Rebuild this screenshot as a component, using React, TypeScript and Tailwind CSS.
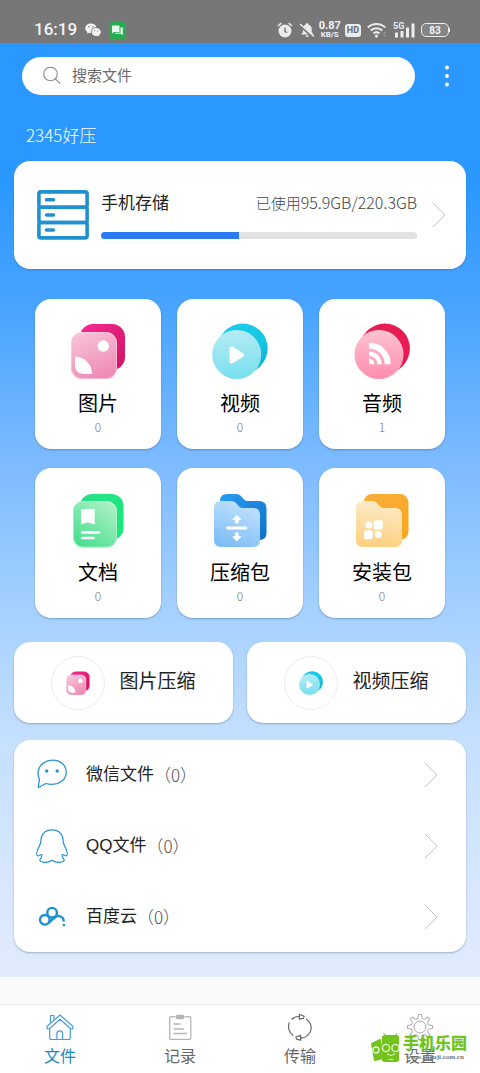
import type { ReactNode } from "react";

const ImageIcon = ({ className }: { className: string }) => (
  <svg viewBox="0 0 56 56" className={className}>
    <defs>
      <linearGradient id="imgBack" x1="0" y1="0" x2="1" y2="1">
        <stop offset="0" stopColor="#f52a92" />
        <stop offset="1" stopColor="#cf1263" />
      </linearGradient>
      <linearGradient id="imgFront" x1="0.2" y1="0" x2="0.6" y2="1">
        <stop offset="0" stopColor="#f9c3da" />
        <stop offset="1" stopColor="#ee8ab6" />
      </linearGradient>
    </defs>
    <rect x="10" y="1" width="45" height="46" rx="13" fill="url(#imgBack)" />
    <rect x="1" y="9" width="46" height="47" rx="11" fill="url(#imgFront)" />
    <rect x="1.5" y="9.5" width="45" height="46" rx="10.5" fill="none" stroke="#fbd5e5" strokeOpacity="0.6" />
    <circle cx="33.3" cy="23" r="5.7" fill="#fff" />
    <path d="M5 33.5C14.5 34 22 41 22 51H14C8 51 5 47.5 5 42Z" fill="#fff" />
  </svg>
);

const VideoIcon = ({ className }: { className: string }) => (
  <svg viewBox="0 0 56 56" className={className}>
    <defs>
      <linearGradient id="vidBack" x1="0" y1="0" x2="1" y2="1">
        <stop offset="0" stopColor="#1fc9ee" />
        <stop offset="0.6" stopColor="#16c8e6" />
        <stop offset="1" stopColor="#13a9c4" />
      </linearGradient>
      <linearGradient id="vidFront" x1="0.4" y1="0" x2="0.5" y2="1">
        <stop offset="0" stopColor="#b5ecf5" />
        <stop offset="1" stopColor="#78dfee" />
      </linearGradient>
    </defs>
    <circle cx="30.7" cy="25.5" r="25" fill="url(#vidBack)" />
    <circle cx="24.7" cy="31.5" r="24.5" fill="url(#vidFront)" />
    <path d="M19.5 25.5V38.5L30 32Z" fill="#fff" stroke="#fff" strokeWidth="4" strokeLinejoin="round" />
  </svg>
);

const AudioIcon = ({ className }: { className: string }) => (
  <svg viewBox="0 0 56 56" className={className}>
    <defs>
      <linearGradient id="audBack" x1="0" y1="0" x2="1" y2="1">
        <stop offset="0" stopColor="#e02052" />
        <stop offset="1" stopColor="#ee1854" />
      </linearGradient>
      <linearGradient id="audFront" x1="0.5" y1="0" x2="0.5" y2="1">
        <stop offset="0" stopColor="#fcc3d1" />
        <stop offset="1" stopColor="#ff8dae" />
      </linearGradient>
    </defs>
    <circle cx="30.9" cy="25.5" r="25" fill="url(#audBack)" />
    <circle cx="25" cy="31.5" r="24.5" fill="url(#audFront)" />
    <path d="M15 35.7A5.5 5.5 0 0 1 20.5 41.2H15Z" fill="#fff" />
    <path d="M15 30.7A10.5 10.5 0 0 1 25.5 41.2" fill="none" stroke="#fff" strokeWidth="4.5" />
    <path d="M15 22.5A18.7 18.7 0 0 1 33.7 41.2" fill="none" stroke="#fff" strokeWidth="6" />
  </svg>
);

const DocIcon = ({ className }: { className: string }) => (
  <svg viewBox="0 0 56 56" className={className}>
    <defs>
      <linearGradient id="docBack" x1="0" y1="0" x2="1" y2="1">
        <stop offset="0" stopColor="#2ce088" />
        <stop offset="1" stopColor="#12ea76" />
      </linearGradient>
      <linearGradient id="docFront" x1="1" y1="0" x2="0.3" y2="1">
        <stop offset="0" stopColor="#b7f3cc" />
        <stop offset="1" stopColor="#4ddf90" />
      </linearGradient>
    </defs>
    <rect x="10" y="2" width="43.5" height="46" rx="12" fill="url(#docBack)" />
    <rect x="3" y="9" width="44" height="46.5" rx="10" fill="url(#docFront)" />
    <rect x="3.5" y="9.5" width="43" height="45.5" rx="9.5" fill="none" stroke="#c5f6d8" strokeOpacity="0.6" />
    <path d="M11 18Q11 17 12 17H23.7Q24.7 17 24.7 18V32.5L17.8 30.3L11 32.5Z" fill="#fff" />
    <path d="M12.2 40.4H29M12.2 46H23.5" stroke="#fff" strokeWidth="2.7" strokeLinecap="round" />
  </svg>
);

const ZipIcon = ({ className }: { className: string }) => (
  <svg viewBox="0 0 56 56" className={className}>
    <defs>
      <linearGradient id="zipBack" x1="0" y1="0" x2="1" y2="1">
        <stop offset="0" stopColor="#2a9bf2" />
        <stop offset="1" stopColor="#0f71cb" />
      </linearGradient>
      <linearGradient id="zipFront" x1="0.7" y1="0" x2="0.3" y2="1">
        <stop offset="0" stopColor="#c3e2fc" />
        <stop offset="1" stopColor="#7dbdf7" />
      </linearGradient>
    </defs>
    <path d="M8 9Q8 2 15 2H24Q27 2 29 4L32 7.5Q33.5 9 36 9H47Q54.5 9 54.5 16.5V41Q54.5 48 47.5 48H15Q8 48 8 41Z" fill="url(#zipBack)" />
    <path d="M2 16Q2 9 9 9H19Q22 9 24 11L27 14.5Q28.5 16 31 16H41Q48 16 48 23V48Q48 55 41 55H9Q2 55 2 48Z" fill="url(#zipFront)" />
    <path d="M15.5 36H34" stroke="#fff" strokeWidth="2.8" strokeLinecap="round" />
    <path
      d="M23.5 31V27.500H20.8L24.8 23.300L28.8 27.500H26.1V31ZM23.5 41V44.800H20.8L24.8 49L28.8 44.800H26.1V41Z"
      fill="#fff"
      stroke="#fff"
      strokeLinejoin="round"
    />
  </svg>
);

const ApkIcon = ({ className }: { className: string }) => (
  <svg viewBox="0 0 56 56" className={className}>
    <defs>
      <linearGradient id="apkBack" x1="0" y1="0" x2="1" y2="1">
        <stop offset="0" stopColor="#f6ae3c" />
        <stop offset="1" stopColor="#fca81d" />
      </linearGradient>
      <linearGradient id="apkFront" x1="0.5" y1="0" x2="0.4" y2="1">
        <stop offset="0" stopColor="#fdebc9" />
        <stop offset="1" stopColor="#fdd080" />
      </linearGradient>
    </defs>
    <rect x="9.5" y="2" width="45" height="46" rx="8.5" fill="url(#apkBack)" />
    <path d="M2 16Q2 9 9 9H18Q21 9 23 11L26 14.5Q27.5 16 30 16H41Q48 16 48 23V48Q48 55 41 55H9Q2 55 2 48Z" fill="url(#apkFront)" />
    <circle cx="14.9" cy="33" r="3.5" fill="#fff" />
    <rect x="19.5" y="28.3" width="9.3" height="9.3" rx="2.5" fill="#fff" />
    <rect x="10" y="38.2" width="8.8" height="9" rx="2.5" fill="#fff" />
    <circle cx="24.2" cy="42.4" r="3.4" fill="#fff" />
  </svg>
);

const ServerIcon = () => (
  <svg viewBox="0 0 52 50" className="h-[50px] w-[52px] shrink-0" fill="none" stroke="#2090cf" strokeWidth="3.6">
    <rect x="1.9" y="1.9" width="48.2" height="15.4" rx="2" />
    <rect x="1.9" y="17.3" width="48.2" height="15.2" rx="2" />
    <rect x="1.9" y="32.5" width="48.2" height="15.4" rx="2" />
    <path d="M9.5 9.7H16.5M9.5 25H16.5M9.5 40H16.5" strokeLinecap="round" />
  </svg>
);

const ChevronIcon = () => (
  <svg viewBox="0 0 14 26" className="h-[26px] w-[14px] shrink-0" fill="none" stroke="#c4c4c4">
    <path d="M1 1L13 13L1 25" />
  </svg>
);

const WechatFileIcon = () => (
  <svg viewBox="0 0 32 34" className="h-[34px] w-8" fill="none" stroke="#2a94cf" strokeWidth="1.3">
    <path d="M3.4 21.5C.8 15.5 2 8.8 7.4 5C13 1 21 1.3 26 5.2C31.5 9.7 31.7 18.5 26 23C21.5 26.7 14.5 27 10 25.5L2.3 29.5Z" strokeLinejoin="round" />
    <circle cx="10.7" cy="13" r="1.7" fill="#2a94cf" stroke="none" />
    <circle cx="21.2" cy="13" r="1.7" fill="#2a94cf" stroke="none" />
  </svg>
);

const QQIcon = () => (
  <svg viewBox="0 0 32 34" className="h-[34px] w-8" fill="none" stroke="#2a94cf" strokeWidth="1.2" strokeLinejoin="round">
    <path d="M16 .8C9 .8 5 5.500 5 11C5 14.500 4 16 2.400 19C.8 22.500 .2 26 1.500 26.800C2.700 27.300 4.200 25 5.600 25.800C6.800 26.600 4.800 28 5.200 29C3.700 30 3.400 31.300 4.600 32.300C6.800 33.900 13 33.700 16 31.300C19 33.700 25.200 33.900 27.400 32.300C28.600 31.300 28.300 30 26.800 29C27.200 28 25.200 26.600 26.400 25.800C27.800 25 29.300 27.300 30.500 26.800C31.800 26 31.200 22.500 29.600 19C28 16 27 14.500 27 11C27 5.500 23 .8 16 .8Z" />
  </svg>
);

const BaiduIcon = () => (
  <svg viewBox="0 0 32 34" className="h-[34px] w-8" fill="none" stroke="#1f8fce" strokeWidth="2.4">
    <circle cx="8.8" cy="19.8" r="4.8" />
    <circle cx="16.1" cy="12.7" r="4.8" />
    <path d="M12.3 23.2L18.7 17.5C22.5 14.5 27.6 16.5 27.8 21.5" />
    <circle cx="27.9" cy="25" r="1.3" fill="#1f8fce" stroke="none" />
  </svg>
);

const HomeIcon = () => (
  <svg viewBox="0 0 28 28" className="h-7 w-7" fill="none" stroke="#4a9cdf" strokeWidth="1.2" strokeLinejoin="round">
    <path d="M1.2 13.3L14 2L26.8 13.3V15.8L25 16L14 6.2L3 16L1.2 15.8Z" />
    <path d="M4.5 10V2.5H8V7M3.7 16V24.5Q3.7 26.5 5.7 26.5H22.3Q24.3 26.5 24.3 24.5V16M10.9 26.5V20.5Q10.9 17.8 13.8 17.8Q16.6 17.8 16.6 20.5V26.5" />
  </svg>
);

const RecordIcon = () => (
  <svg viewBox="0 0 28 28" className="h-7 w-7" fill="none" stroke="#b5b5b5" strokeWidth="1.3">
    <path d="M9 3.7H5Q3.7 3.7 3.7 5V25Q3.7 26.3 5 26.3H23.5Q24.8 26.3 24.8 25V5Q24.8 3.7 23.5 3.7H19" />
    <rect x="9.5" y="1.8" width="9" height="4.4" rx="2" fill="#b5b5b5" stroke="none" />
    <path d="M7.5 11H14.5M7.5 16H18M7.5 20.5H21" />
  </svg>
);

const TransferIcon = () => (
  <svg viewBox="0 0 28 28" className="h-7 w-7" fill="none" stroke="#666" strokeWidth="1.2" strokeLinejoin="round">
    <path d="M5.6 6.5C8 4 10.5 3.4 13 3.5M20 6C25.5 9.500 26.5 16 23.300 20.500C21 23.700 18 25 14.500 25.200M7.300 22.700C2.800 19.500 1.500 14 3.300 9.500" />
    <path d="M13.5 1.2L18.2 3.2L17.3 5.4L13.3 6.2Z" />
    <path d="M14.5 22.3L9.8 24L10.8 26.3L14.8 27.2Z" />
  </svg>
);

const gearAngles = [0, 45, 90, 135, 180, 225, 270, 315];

const SettingsIcon = () => (
  <svg viewBox="0 0 28 28" className="h-7 w-7" fill="none" stroke="#aaa" strokeLinejoin="round">
    <circle cx="14" cy="14" r="6" />
    {gearAngles.map((a) => (
      <g key={a} transform={`rotate(${a} 14 14)`}>
        <path d="M12 5L12.5 1.5H15.5L16 5Q18 7.3 18.95 6.22" />
      </g>
    ))}
  </svg>
);

const categories = [
  { name: "图片", count: 0, Icon: ImageIcon },
  { name: "视频", count: 0, Icon: VideoIcon },
  { name: "音频", count: 1, Icon: AudioIcon },
  { name: "文档", count: 0, Icon: DocIcon },
  { name: "压缩包", count: 0, Icon: ZipIcon },
  { name: "安装包", count: 0, Icon: ApkIcon },
];

const compressTools = [
  { name: "图片压缩", Icon: ImageIcon },
  { name: "视频压缩", Icon: VideoIcon },
];

const sources = [
  { name: "微信文件", count: 0, Icon: WechatFileIcon },
  { name: "QQ文件", count: 0, Icon: QQIcon },
  { name: "百度云", count: 0, Icon: BaiduIcon },
];

const tabs = [
  { name: "文件", Icon: HomeIcon, active: true },
  { name: "记录", Icon: RecordIcon, active: false },
  { name: "传输", Icon: TransferIcon, active: false },
  { name: "设置", Icon: SettingsIcon, active: false },
];

function StatusBar() {
  return (
    <div className="flex h-[43px] items-end justify-between bg-[#777] pr-[30px] pb-1 pl-[34px] font-['Roboto',sans-serif] text-[#f2f2f2]">
      <div className="flex h-[18px] items-center">
        <span className="text-[17px] font-medium">16:19</span>
        <svg viewBox="0 0 16 14" className="ml-2 h-3.5 w-4" fill="#f2f2f2">
          <path d="M6 .5C2.7 .5 .3 2.6 .3 5.3C.3 6.9 1.1 8.2 2.4 9L1.9 10.7L3.9 9.7C4.6 9.9 5.3 10 6 10C5.3 6.7 8 4.2 11.5 4.2C11 2 8.7 .5 6 .5Z" />
          <path d="M11.2 4.9C8.5 4.9 6.6 6.7 6.6 8.9C6.6 11.2 8.6 12.9 11.2 12.9C11.8 12.9 12.3 12.8 12.8 12.7L14.4 13.5L14 12.1C15.2 11.3 15.8 10.2 15.8 8.9C15.8 6.7 13.8 4.9 11.2 4.9Z" />
          <g fill="#777">
            <circle cx="4" cy="3.8" r=".8" />
            <circle cx="7.8" cy="3.8" r=".8" />
            <circle cx="9.7" cy="7.8" r=".6" />
            <circle cx="12.8" cy="7.8" r=".6" />
          </g>
        </svg>
        <svg viewBox="0 0 17 17" className="ml-2 h-[17px] w-[17px]">
          <rect width="17" height="17" rx="3.5" fill="#27ad4f" />
          <path d="M3 3.5H10.5V10H5L3 11.5Z" fill="#e9f8ed" />
          <path d="M11.5 5.5H13.8V13.2L12 11.8H6V10.8H11.5Z" fill="#e9f8ed" />
        </svg>
      </div>
      <div className="flex h-[18px] items-center">
        <svg viewBox="0 0 16 16" className="h-4 w-4" fill="none" stroke="#ececec">
          <circle cx="8" cy="9" r="6.5" fill="#ececec" stroke="none" />
          <path d="M1 4L4.3 1.2M15 4L11.7 1.2" strokeWidth="1.6" />
          <path d="M8 5.5V9.3L10 10.8" stroke="#777" strokeWidth="1.4" />
        </svg>
        <svg viewBox="0 0 16 16" className="ml-1.5 h-4 w-4" fill="#ececec">
          <path d="M8 1.2C9 1.2 9.4 1.7 9.4 2.4C11.6 3 12.7 4.8 12.7 7V10L14.5 12.5H2.3L3.9 10V7C3.9 4.8 5 3 6.7 2.4C6.7 1.7 7.2 1.2 8 1.2ZM6.3 13.5H9.9Q9.6 15 8.1 15Q6.7 15 6.3 13.5Z" />
          <path d="M.5 3L14 15" stroke="#777" strokeWidth="2.4" />
          <path d="M1 2L15 14.5" stroke="#ececec" strokeWidth="1.4" />
        </svg>
        <div className="ml-1 flex flex-col items-center">
          <span className="text-[11px] leading-[10px] font-bold">0.87</span>
          <span className="text-[8px] leading-[8px] font-bold">KB/S</span>
        </div>
        <span className="ml-1 rounded-[3px] bg-[#ececec] px-0.5 text-[9px] leading-[13px] font-bold text-[#666]">HD</span>
        <svg viewBox="0 0 20 16" className="ml-1.5 h-4 w-5" fill="none" stroke="#ececec" strokeWidth="2">
          <path d="M.8 5.5C5.5 .7 13.5 .7 18.2 5.5M3.7 8.6C6.9 5.6 12.1 5.6 15.3 8.6M6.5 11.5C8.3 9.9 10.7 9.9 12.5 11.5" />
          <circle cx="9.5" cy="14" r="1.5" fill="#ececec" stroke="none" />
          <path d="M16 11.300L17.500 9.500L19 11.300ZM16 13L17.500 14.800L19 13Z" fill="#a0a0a0" stroke="none" />
        </svg>
        <svg viewBox="0 0 22 16" className="ml-1.5 h-4 w-[22px]" fill="#ececec">
          <text x="0" y="7" fontSize="9" fontWeight="700">5G</text>
          <rect x="2" y="10.5" width="3" height="5" />
          <rect x="7.5" y="9" width="3" height="6.5" />
          <rect x="13" y="5.5" width="3" height="10" />
          <rect x="18.5" y="1.5" width="3" height="14" />
        </svg>
        <div className="ml-1.5 flex items-center">
          <span className="flex h-3.5 w-7 items-center justify-center rounded-[5px] border border-[#ececec] bg-[#858585] text-[10px] font-bold">
            83
          </span>
          <span className="h-1 w-px bg-[#ececec]" />
        </div>
      </div>
    </div>
  );
}

function Card({ className, children }: { className: string; children: ReactNode }) {
  return (
    <button className={`rounded-2xl bg-white shadow-[0_1px_2px_rgba(40,70,110,0.35)] ${className}`}>{children}</button>
  );
}

function Watermark() {
  return (
    <div className="pointer-events-none absolute right-[13px] bottom-2.5 flex items-center">
      <svg viewBox="0 0 30 30" className="h-[30px] w-[30px]">
        <path d="M1 11L9 7L12 25L4 27Z" fill="#72c31c" stroke="#72c31c" strokeWidth="2" strokeLinejoin="round" />
        <rect x="11" y="2" width="17" height="27" rx="2.5" fill="#72c31c" />
        <path d="M14 2L12.5 0M24.5 2L26 0" stroke="#72c31c" />
        <g fill="#72c31c" stroke="#e9f8d4" strokeWidth="1.3">
          <circle cx="5" cy="17" r="3" />
          <circle cx="15" cy="15" r="3.6" />
          <circle cx="24.5" cy="15" r="3.6" />
        </g>
        <path d="M16 21Q20 24 24 21" fill="none" stroke="#e9f8d4" />
        <path d="M18 26.5H22" stroke="#fff" />
      </svg>
      <div className="ml-0.5 flex flex-col items-center">
        <span className="text-base leading-[18px] font-black text-[#72c31c]">手机乐园</span>
        <span className="font-['Liberation_Serif',serif] text-[7px] leading-[8px] font-bold text-[#777]">
          www.shouji.com.cn
        </span>
      </div>
    </div>
  );
}

export default function App() {
  const used = 95.9;
  const total = 220.3;

  return (
    <div className="min-h-screen bg-[#fafafa] font-['Liberation_Sans','Noto_Sans_CJK_SC',sans-serif] text-[#222]">
      <StatusBar />

      <main className="bg-[linear-gradient(180deg,#2b98ff_0%,#2b98ff_15%,#48a4ff_28%,#7dbbff_45%,#a8d2ff_62%,#c6e0fe_75%,#e1ebfd_100%)] px-3.5 pt-3.5 pb-[25px]">
        <div className="flex items-center pl-2">
          <label className="flex h-[38px] flex-1 items-center rounded-[19px] bg-white pl-5">
            <svg viewBox="0 0 20 20" className="h-5 w-5" fill="none" stroke="#8a8a8a" strokeWidth="1.1">
              <circle cx="8.500" cy="8" r="6.8" />
              <path d="M13.3 12.8L18.3 17.7" />
            </svg>
            <input
              type="search"
              aria-label="搜索文件"
              placeholder="搜索文件"
              className="ml-2.5 min-w-0 flex-1 bg-transparent text-[15px] leading-6 outline-none placeholder:text-[#6b6b6b]"
            />
          </label>
          <button aria-label="更多" className="mr-0.5 ml-[15px] flex h-[38px] w-[34px] items-center justify-center">
            <svg viewBox="0 0 4 22" className="h-[22px] w-1" fill="#fff">
              <circle cx="2" cy="2.5" r="1.9" />
              <circle cx="2" cy="11" r="1.9" />
              <circle cx="2" cy="19.5" r="1.9" />
            </svg>
          </button>
        </div>

        <h1 className="mt-7 mb-3.5 pl-3 font-['Noto_Sans_CJK_SC',sans-serif] text-[17px] leading-6 font-light text-white">
          2345好压
        </h1>

        <Card className="flex h-[108px] w-full items-center pr-5 pl-[23px] text-left">
          <ServerIcon />
          <div className="ml-3 flex-1">
            <div className="flex items-start justify-between">
              <span className="text-[17px] leading-6">手机存储</span>
              <span className="font-['Noto_Sans_CJK_SC',sans-serif] text-base leading-5 font-light text-[#444]">
                <span className="text-[15px]">已使用</span>
                {used}GB/{total}GB
              </span>
            </div>
            <div
              role="progressbar"
              aria-label="手机存储"
              aria-valuenow={used}
              aria-valuemax={total}
              className="mt-4 h-[7px] overflow-hidden rounded-full bg-[#e2e2e2]"
            >
              <div className="h-full bg-[#2a7bf3]" style={{ width: `${(used / total) * 100}%` }} />
            </div>
          </div>
          <div className="ml-[15px]">
            <ChevronIcon />
          </div>
        </Card>

        <div className="mt-[30px] grid grid-cols-3 gap-x-4 gap-y-[19px] px-[21px]">
          {categories.map(({ name, count, Icon }) => (
            <Card key={name} className="flex flex-col items-center pt-6 pb-3.5">
              <Icon className="h-14 w-14" />
              <span className="mt-3 text-xl leading-[26px] text-black">{name}</span>
              <span className="mt-0.5 font-['Noto_Sans_CJK_SC',sans-serif] text-xs leading-4 font-light text-[#777]">
                {count}
              </span>
            </Card>
          ))}
        </div>

        <div className="mt-6 grid grid-cols-2 gap-3.5">
          {compressTools.map(({ name, Icon }) => (
            <Card key={name} className="flex h-[81px] items-center justify-center gap-3.5">
              <span className="flex h-[54px] w-[54px] items-center justify-center rounded-full border border-[#ececec]">
                <Icon className="h-6 w-6" />
              </span>
              <span className="text-[19px]">{name}</span>
            </Card>
          ))}
        </div>

        <ul className="mt-[17px] flex flex-col gap-px rounded-2xl bg-white shadow-[0_1px_2px_rgba(40,70,110,0.35)]">
          {sources.map(({ name, count, Icon }) => (
            <li key={name}>
              <button className="flex h-[70px] w-full items-center pr-7 pl-[22px] text-left text-[17px]">
                <Icon />
                <span className="ml-[18px]">{name}</span>
                <span className="flex-1 font-['Noto_Sans_CJK_SC',sans-serif] font-light text-[#555]">（{count}）</span>
                <ChevronIcon />
              </button>
            </li>
          ))}
        </ul>
      </main>

      <nav className="relative mt-[27px] grid grid-cols-4 border-t border-[#ebebeb] bg-white">
        {tabs.map(({ name, Icon, active }) => (
          <a
            key={name}
            href="#"
            className={`flex flex-col items-center pt-2 text-base leading-8 ${active ? "text-[#2089bd]" : "text-[#666]"}`}
          >
            <Icon />
            {name}
          </a>
        ))}
        <Watermark />
      </nav>
    </div>
  );
}
